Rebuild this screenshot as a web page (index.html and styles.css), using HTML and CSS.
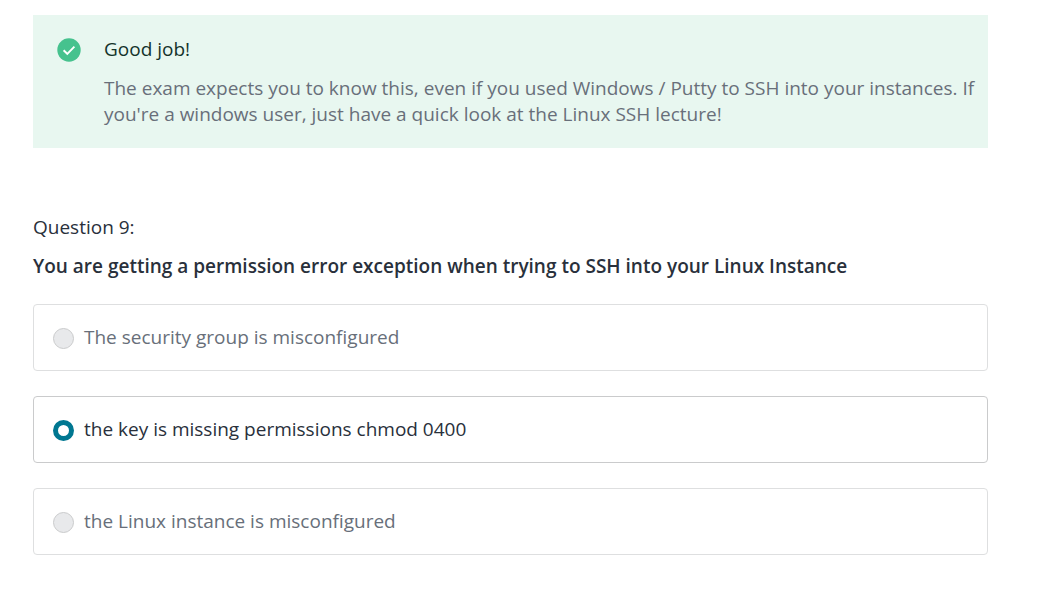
FILE: index.html
```html
<!DOCTYPE html>
<html lang="en">
<head>
<meta charset="utf-8">
<meta name="viewport" content="width=device-width, initial-scale=1">
<title>Practice test</title>
<link rel="stylesheet" href="styles.css">
</head>
<body>
<main class="quiz">
  <section class="alert">
    <svg class="alert-icon" viewBox="0 0 24 24" aria-hidden="true">
      <circle cx="12" cy="12" r="11.7" fill="#46c28e"/>
      <path d="M6.6 12.2l3.7 3.6 7.1-7.1" fill="none" stroke="#fff" stroke-width="1.9"/>
    </svg>
    <div class="alert-body">
      <h2 class="alert-title">Good job!</h2>
      <p class="alert-text">The exam expects you to know this, even if you used Windows / Putty to SSH into your instances. If you're a windows user, just have a quick look at the Linux SSH lecture!</p>
    </div>
  </section>
  <form class="question">
    <p class="question-number">Question 9:</p>
    <h1 class="question-prompt">You are getting a permission error exception when trying to SSH into your Linux Instance</h1>
    <div class="answers">
      <label class="answer"><input class="radio" type="radio" name="answer" disabled><span>The security group is misconfigured</span></label>
      <label class="answer answer-selected"><input class="radio" type="radio" name="answer" checked><span>the key is missing permissions chmod 0400</span></label>
      <label class="answer"><input class="radio" type="radio" name="answer" disabled><span>the Linux instance is misconfigured</span></label>
    </div>
  </form>
</main>
</body>
</html>
```
FILE: styles.css
```css
* {
  box-sizing: border-box;
}

body {
  margin: 0;
  background: #fff;
  color: #29303b;
  font: 400 19px/26px "Open Sans", sans-serif;
}

.quiz {
  padding: 15px 63px 40px 33px;
}

.alert {
  display: flex;
  gap: 23px;
  padding: 21px 10px 21px 24px;
  background: #e8f7f0;
}

.alert-icon {
  flex: none;
  width: 24px;
  height: 24px;
  margin-top: 2px;
}

.alert-title {
  margin: 0 0 13px;
  color: #14332b;
  font-size: 19px;
  font-weight: 400;
}

.alert-text {
  margin: 0;
  color: #686f7a;
}

.question {
  margin-top: 66px;
}

.question-number {
  margin: 0 0 13px;
}

.question-prompt {
  margin: 0 0 25px;
  font-size: 19px;
  font-weight: 600;
}

.answers {
  display: grid;
  gap: 25px;
}

.answer {
  display: flex;
  align-items: center;
  gap: 10px;
  padding: 19px 19px 20px;
  border: 1px solid #dedfe0;
  border-radius: 4px;
  color: #686f7a;
}

.answer-selected {
  border-color: #cacbcc;
  color: #29303b;
}

.radio {
  appearance: none;
  flex: none;
  width: 21px;
  height: 21px;
  margin: 2px 0 0;
  border: 1px solid #cacbcc;
  border-radius: 50%;
  background: #e8e9eb;
}

.radio:checked {
  border: 5px solid #007791;
  background: #fff;
}
```
